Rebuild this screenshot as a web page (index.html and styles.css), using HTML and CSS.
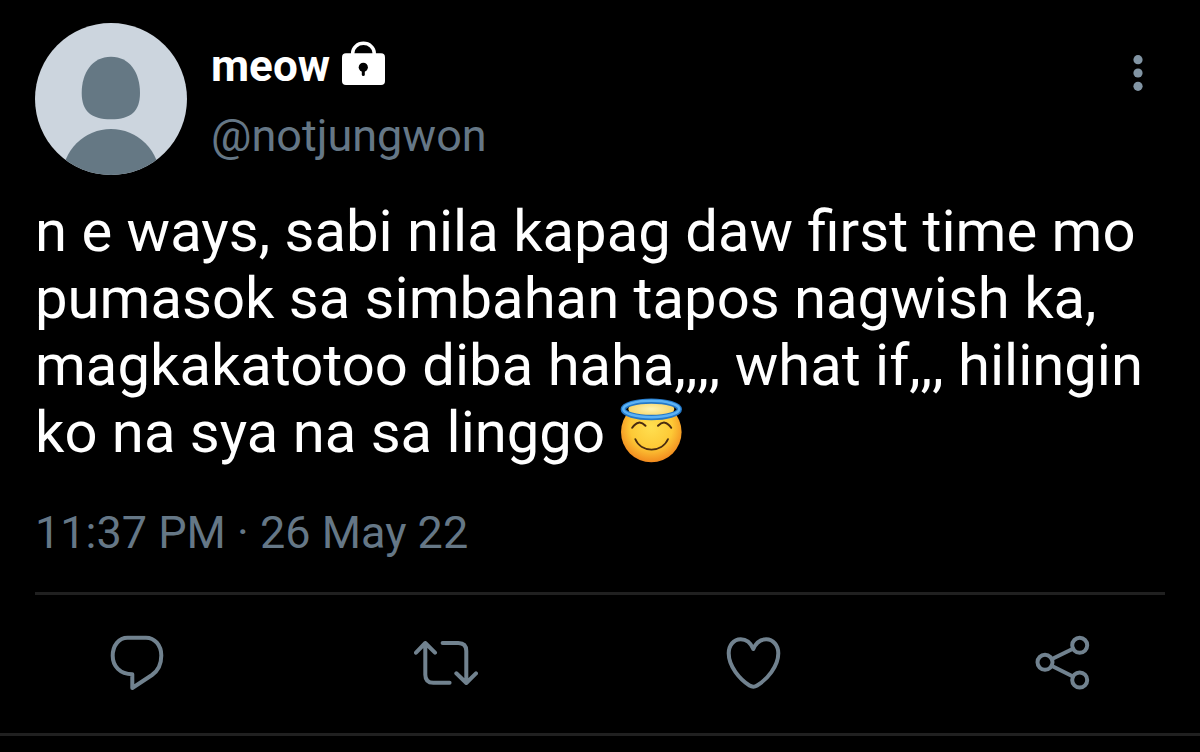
FILE: index.html
```html
<!DOCTYPE html>
<html lang="tl">
<head>
    <meta charset="UTF-8">
    <meta name="viewport" content="width=device-width, initial-scale=1">
    <title>meow (@notjungwon)</title>
    <link rel="stylesheet" href="styles.css">
</head>
<body>

<article class="tweet">
    <header class="tweet-header">
        <svg class="avatar" viewBox="0 0 152 152" role="img" aria-label="meow">
            <rect width="152" height="152" fill="#ccd5de"/>
            <path fill="#657884" d="M76 33.7C95 33.7 105 50 105 70C105 88 96 96.3 76 96.3S46.7 88 46.7 70C46.7 50 57 33.7 76 33.7Z"/>
            <circle cx="76" cy="154.7" r="48.7" fill="#657884"/>
        </svg>
        <div class="author">
            <div class="name">
                <span>meow</span>
                <svg class="lock" viewBox="0 0 43 44" role="img" aria-label="Protected account">
                    <path d="M10.7 14V12A10.7 9.6 0 0 1 32.2 12V14" fill="none" stroke="#fff" stroke-width="3.5"/>
                    <rect y="12.3" width="43" height="31.7" rx="4" fill="#fff"/>
                    <circle cx="21.3" cy="26.3" r="4.6"/>
                    <path d="M21.3 27V33.5" stroke="#000" stroke-width="3" stroke-linecap="round"/>
                </svg>
            </div>
            <a class="handle" href="#">@notjungwon</a>
        </div>
        <button class="more" aria-label="More">
            <svg viewBox="0 0 10 36">
                <circle cx="5" cy="4.7" r="4.6"/>
                <circle cx="5" cy="18" r="4.6"/>
                <circle cx="5" cy="31.3" r="4.6"/>
            </svg>
        </button>
    </header>

    <p class="text">n e ways, sabi nila kapag daw first time mo pumasok sa simbahan tapos nagwish ka, magkakatotoo diba haha,,,, what if,,, hilingin ko na sya na sa linggo <svg class="emoji" viewBox="0 0 64 66" role="img" aria-label="smiling face with halo">
        <defs>
            <radialGradient id="face" cx="50%" cy="42%" r="58%">
                <stop offset="0" stop-color="#ffdf50"/>
                <stop offset="0.6" stop-color="#fdc936"/>
                <stop offset="1" stop-color="#f28a1e"/>
            </radialGradient>
            <radialGradient id="shine">
                <stop offset="0" stop-color="#fff3b0"/>
                <stop offset="1" stop-color="#f7d568"/>
            </radialGradient>
        </defs>
        <circle cx="32.3" cy="34" r="30.3" fill="url(#face)"/>
        <ellipse cx="32.3" cy="11" rx="23" ry="8" fill="url(#shine)"/>
        <g fill="none">
            <ellipse cx="32.3" cy="11.3" rx="28" ry="8.2" stroke="#2478c8" stroke-width="5.4"/>
            <ellipse cx="32.3" cy="11" rx="28" ry="8.2" stroke="#5bb2f5" stroke-width="2.6"/>
            <path d="M13.2 29.8Q19.5 20.5 26.5 27.8M39 27.8Q46 20.5 52.2 29.8" stroke="#4a2c10" stroke-width="2" stroke-linecap="round"/>
            <path d="M16.3 41.2C22 55 43 55 49 41.2" stroke="#4a2c10" stroke-width="1.8" stroke-linecap="round"/>
        </g>
    </svg></p>

    <time class="date" datetime="2022-05-26T23:37">11:37 PM · 26 May 22</time>

    <div class="actions">
        <button aria-label="Reply">
            <svg viewBox="0 0 64 64"><path d="M41 6.7H22.5C14 6.7 7.7 14.5 7.7 24.8S15 43.3 27.3 43.3V57L47 44C53 39.8 56.3 33 56.3 24.5C56.3 14 49.5 6.7 41 6.7Z"/></svg>
        </button>
        <button aria-label="Retweet">
            <svg viewBox="0 0 64 64"><path d="M2 21.7L11.3 12L21 21.7M11.3 12V43.7Q11.3 51.7 19.3 51.7H35.6M28.6 12H44.3Q52.3 12 52.3 20V52M42.3 42.3L52.3 52L62 42.3"/></svg>
        </button>
        <button aria-label="Like">
            <svg viewBox="0 0 64 64"><path d="M31.3 18C28.5 11.5 24 8.3 18.7 8.3C11.5 8.3 6.7 14.5 6.7 22.3C6.7 35.5 18 48.5 27.5 54.5Q31.3 56.8 35.1 54.5C45 48.5 56.3 35.5 56.3 22.3C56.3 14.5 51.2 8.3 44.2 8.3C38.7 8.3 34.1 11.5 31.3 18Z"/></svg>
        </button>
        <button aria-label="Share">
            <svg viewBox="0 0 64 64">
                <circle cx="14" cy="31.3" r="7.5"/>
                <circle cx="48.7" cy="14.3" r="7.5"/>
                <circle cx="48.7" cy="49" r="7.5"/>
                <path d="M21 28L42 17.8M21 35L42 45.5"/>
            </svg>
        </button>
    </div>
</article>

</body>
</html>
```
FILE: styles.css
```css
body { margin: 0; background-color: #000; color: #fff; font-family: Roboto, sans-serif; }
button { padding: 0; border: none; background: none; cursor: pointer; }
svg { display: block; }

.tweet { padding: 23px 35px 0; border-bottom: 3px solid #202020; }
.tweet-header { display: flex; align-items: flex-start; }
.avatar { width: 152px; height: 152px; border-radius: 50%; flex-shrink: 0; }
.author { flex: 1; margin-left: 24px; padding-top: 17px; }
.name { display: flex; align-items: center; gap: 12px; font-size: 44px; font-weight: 700; line-height: 52px; }
.lock { width: 43px; height: 44px; margin-bottom: 6px; }
.handle { display: block; margin-top: 18px; color: #657786; font-size: 45px; line-height: 52px; text-decoration: none; }
.more { margin-top: 32px; padding: 0 22px; }
.more svg { width: 10px; height: 36px; fill: #8295a4; }

.text { margin: 23px 0 0; font-size: 58px; line-height: 67px; }
.emoji { display: inline-block; width: 64px; height: 66px; margin: -20px 0; vertical-align: 8px; }
.date { display: block; margin-top: 41px; color: #657786; font-size: 45px; line-height: 52px; }

.actions { display: flex; justify-content: space-between; margin-top: 33px; padding: 36px 70px 38px; border-top: 3px solid #202020; }
.actions svg { width: 64px; height: 64px; fill: none; stroke: #71828f; stroke-width: 4; stroke-linecap: round; stroke-linejoin: round; }
```
